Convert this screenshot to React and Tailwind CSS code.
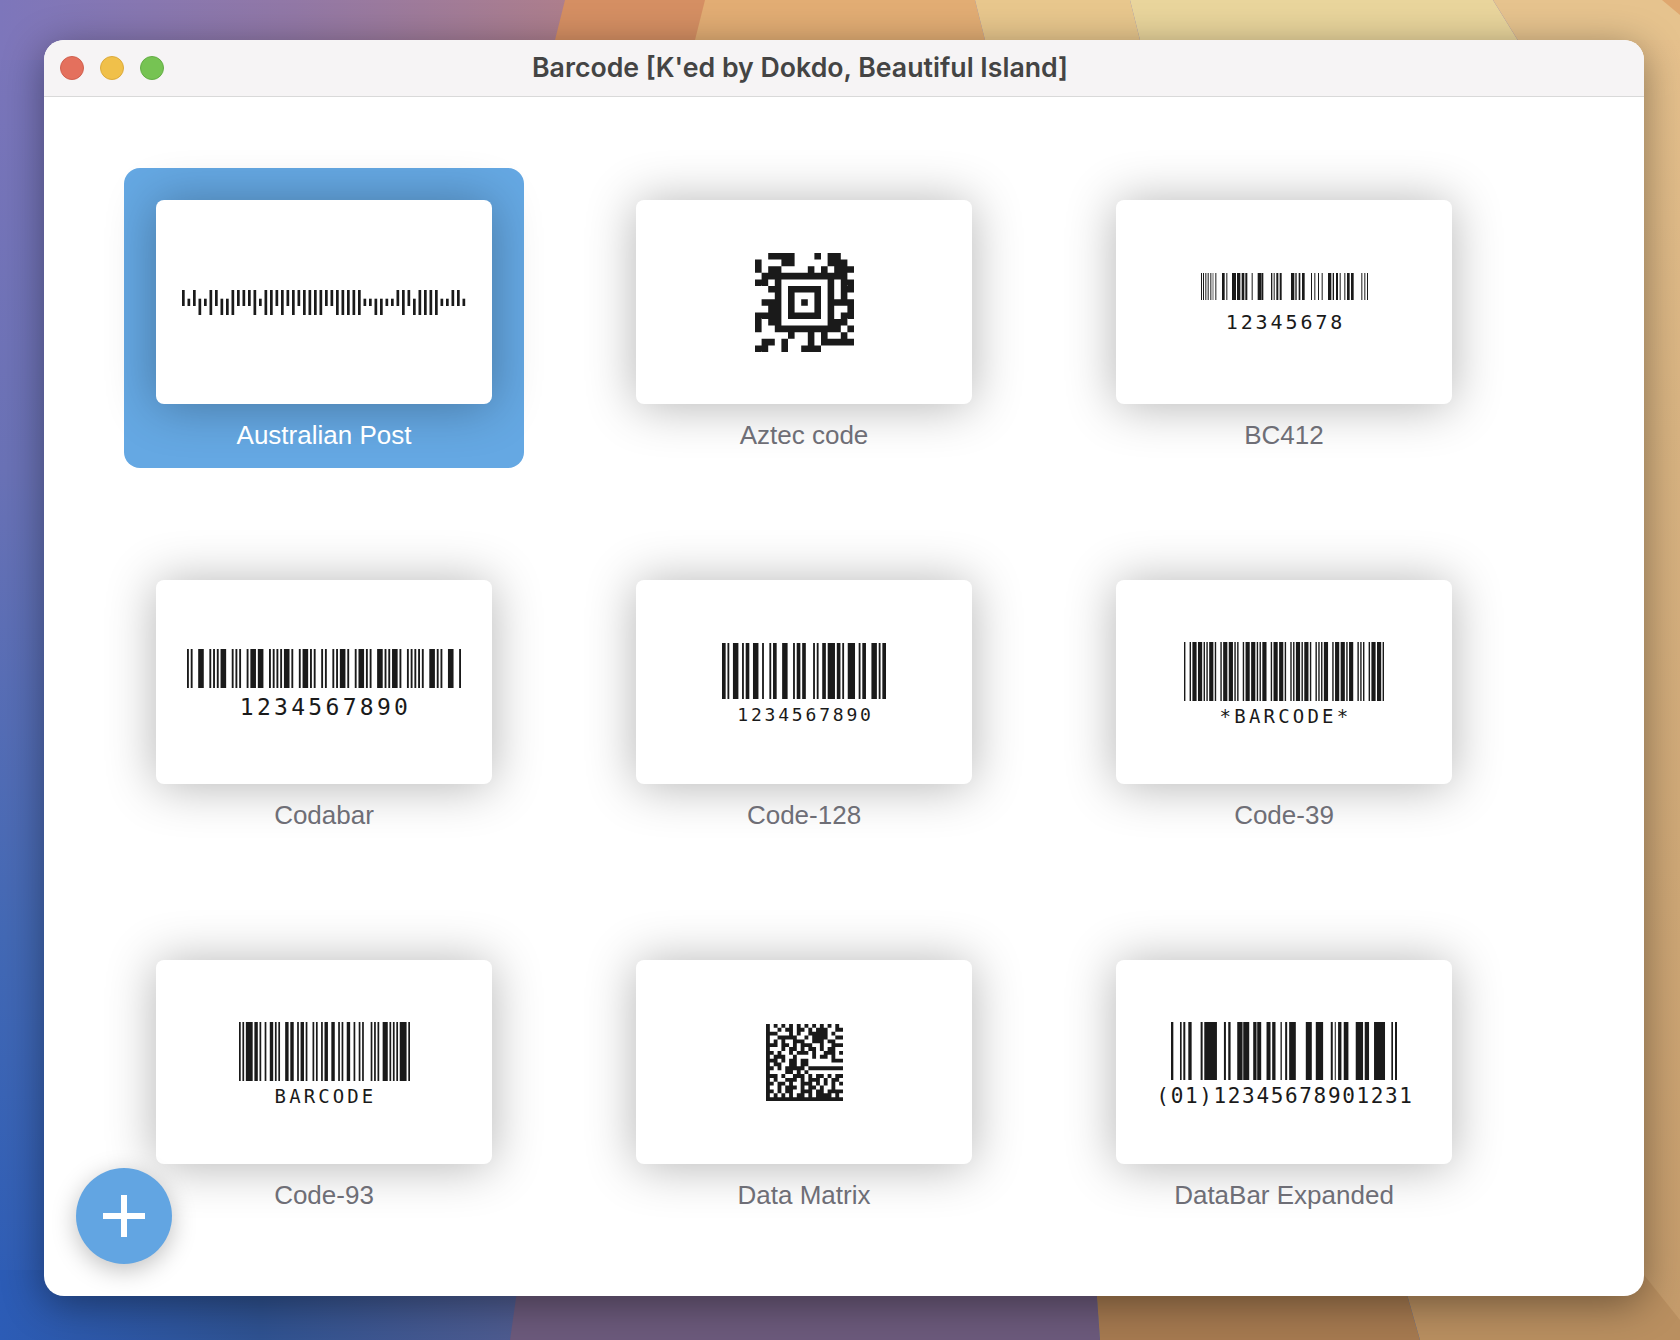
import React from 'react'

const mono = "font-['DejaVu_Sans_Mono',monospace]"

// run-length strings: bar, space, bar, space ...
function fromRuns(runs) {
  const rects = []
  let x = 0
  runs.replace(/\s/g, '').split('').forEach((ch, i) => {
    const w = Number(ch)
    if (i % 2 === 0) rects.push([x, w])
    x += w
  })
  return { rects, total: x }
}

// binary n/w patterns to widths, with a narrow gap between characters
function wideNarrow(chars) {
  const parts = chars.map(c => c.split('').map(d => (d === '1' ? '3' : '1')).join(''))
  return parts.join('1')
}

function Bars({ runs, spans, total, className }) {
  const data = runs ? fromRuns(runs) : { rects: spans.map(([a, b]) => [a, b - a]), total }
  return (
    <svg className={className} viewBox={`0 0 ${data.total} 10`} preserveAspectRatio="none">
      {data.rects.map(([x, w], i) => (
        <rect key={i} x={x} y={0} width={w} height={10} fill="#1a1a1a" />
      ))}
    </svg>
  )
}

function Grid2D({ rows, className }) {
  const n = rows.length
  let d = ''
  rows.forEach((row, y) => {
    row.split('').forEach((c, x) => {
      if (c === '#') d += `M${x} ${y}h1v1h-1z`
    })
  })
  return (
    <svg className={className} viewBox={`0 0 ${n} ${n}`}>
      <path d={d} fill="#1a1a1a" />
    </svg>
  )
}

const AUS = 'ATADTFADDFAAAFTFFAFAFAFFFFAAFFFFFTTDDTTAFADFFFFTTAAT'

function AusPost() {
  const pitch = 5.5
  const y = { F: [0, 25], A: [0, 16], D: [8.7, 25], T: [8.7, 16] }
  return (
    <svg className="w-[284px] h-[25px]" viewBox="0 0 284 25">
      {AUS.split('').map((s, i) => (
        <rect key={i} x={i * pitch} y={y[s][0]} width={2.7} height={y[s][1] - y[s][0]} fill="#1a1a1a" />
      ))}
    </svg>
  )
}

const AZTEC = [
  '..####...#.##..',
  '#...##.....###.',
  '#.##....#.#.###',
  '.#############.',
  '##.#.......#.##',
  '..##.#####.#.##',
  '...#.#...#.#.#.',
  '.###.#.#.#.####',
  '..##.#...#.#..#',
  '####.#####.#.##',
  '#.##.......###.',
  '#..##########.#',
  '.....#..#.#..#.',
  '.##.#...#.#####',
  '##..#..###.....',
]

const MATRIX = [
  '#.#.#.#.#.#.#.#.#.#.',
  '#..#.##.##.#.###..##',
  '###...#.#..#####.#..',
  '#..#####..#.####..##',
  '#.#.#..###..###.##..',
  '###.##.#.###..#..###',
  '#...#.##.#.##.#.##..',
  '##.#..#.###.#..###.#',
  '#.###..#....#.##.#..',
  '###.#.##.##......###',
  '#.##..##.##.........',
  '##.#.#####.#########',
  '#....##.#.#.........',
  '###.#..###.#.##.#.##',
  '#.#..###.#.###.#.##.',
  '##.##.#..###.#.#.#.#',
  '#..#.###.#.##.#..#..',
  '##.#.##..###.##.####',
  '#.#.#.#.##.#.####.#.',
  '####################',
]

const BC412 = [
  [62, 65], [68, 71], [75, 78], [82, 85], [90, 93], [97, 99], [105, 108], [125, 133], [138, 141],
  [155, 167], [170, 180], [184, 192], [195, 201], [214, 217], [232, 244], [245, 249], [272, 276],
  [280, 283], [288, 294], [298, 304], [332, 342], [345, 349], [355, 360], [365, 373], [392, 395],
  [402, 405], [413, 416], [424, 427], [443, 453], [457, 461], [467, 473], [478, 481], [492, 495],
  [500, 508], [512, 520], [543, 546], [552, 555], [560, 563],
].map(([a, b]) => [a - 62, b - 62])

const DATABAR = [
  [63, 70], [90, 95], [100, 106], [115, 125], [152, 158], [163, 201], [222, 228], [235, 242],
  [262, 278], [280, 298], [310, 320], [322, 334], [350, 362], [367, 377], [392, 396], [406, 412],
  [418, 438], [468, 486], [498, 520], [543, 549], [555, 558], [565, 575], [582, 596], [618, 640],
  [645, 658], [673, 706], [725, 730], [736, 742],
].map(([a, b]) => [a - 63, b - 63])

const CODABAR = wideNarrow([
  '0001110', '0000110', '0001001', '1100000', '0010010', '1000010', '0100001',
  '0100100', '0110000', '1001000', '0000011', '0001110',
])

const CODE128 = '211232 112232 131123 331121 241112 214121 124211 2331112'

const CODE39 = wideNarrow([
  '010010100', '001001001', '100001001', '100000110', '101001000',
  '100010010', '000011001', '100011000', '010010100',
])

const CODE93 = '111141 211212 211113 212211 211311 121122 221112 221211 141111 123111 111141 1'

const ITEMS = [
  { name: 'Australian Post', code: <AusPost />, selected: true },
  { name: 'Aztec code', code: <Grid2D rows={AZTEC} className="w-[99px] h-[99px]" /> },
  {
    name: 'BC412',
    code: (
      <>
        <Bars spans={BC412} total={501} className="w-[167px] h-[27px]" />
        <div className={`${mono} mt-[13px] pl-[3px] text-[20px] leading-[18px] tracking-[2.9px] text-[#1a1a1a]`}>12345678</div>
      </>
    ),
  },
  {
    name: 'Codabar',
    code: (
      <>
        <Bars runs={CODABAR} className="w-[274px] h-[39px]" />
        <div className={`${mono} mt-[11px] pl-[3px] text-[23px] leading-[16px] tracking-[3.3px] text-[#1a1a1a]`}>1234567890</div>
      </>
    ),
  },
  {
    name: 'Code-128',
    code: (
      <>
        <Bars runs={CODE128} className="w-[164px] h-[56px]" />
        <div className={`${mono} mt-[10px] pl-[3px] text-[18px] leading-[12px] tracking-[2.8px] text-[#1a1a1a]`}>1234567890</div>
      </>
    ),
  },
  {
    name: 'Code-39',
    code: (
      <>
        <Bars runs={CODE39} className="w-[200px] h-[59px]" />
        <div className={`${mono} mt-[9px] pl-[3px] text-[19px] leading-[12px] tracking-[3.2px] text-[#1a1a1a]`}>*BARCODE*</div>
      </>
    ),
  },
  {
    name: 'Code-93',
    code: (
      <>
        <Bars runs={CODE93} className="w-[171px] h-[59px]" />
        <div className={`${mono} mt-[9px] pl-[3px] text-[19px] leading-[12px] tracking-[3.1px] text-[#1a1a1a]`}>BARCODE</div>
      </>
    ),
  },
  { name: 'Data Matrix', code: <Grid2D rows={MATRIX} className="w-[77px] h-[77px]" /> },
  {
    name: 'DataBar Expanded',
    code: (
      <>
        <Bars spans={DATABAR} total={679} className="w-[226px] h-[58px]" />
        <div className={`${mono} mt-[10px] pl-[2px] text-[21px] leading-[12px] tracking-[1.65px] text-[#1a1a1a]`}>(01)12345678901231</div>
      </>
    ),
  },
]

function Wallpaper() {
  return (
    <svg className="absolute inset-0 w-[1680px] h-[1340px]" viewBox="0 0 1680 1340">
      <defs>
        <linearGradient id="left" x1="0" y1="0" x2="0" y2="1">
          <stop offset="0" stopColor="#7d76bb" />
          <stop offset="0.35" stopColor="#6a72b6" />
          <stop offset="0.7" stopColor="#4369b5" />
          <stop offset="1" stopColor="#2c5cb6" />
        </linearGradient>
        <linearGradient id="topband" x1="0" y1="0" x2="1" y2="0">
          <stop offset="0" stopColor="#7d76bb" />
          <stop offset="0.5" stopColor="#9278a6" />
          <stop offset="1" stopColor="#b07f8a" />
        </linearGradient>
        <linearGradient id="bottomblue" x1="0" y1="0" x2="1" y2="0">
          <stop offset="0" stopColor="#2c5cb6" />
          <stop offset="0.5" stopColor="#2f5291" />
          <stop offset="1" stopColor="#4f5c90" />
        </linearGradient>
        <linearGradient id="rightband" x1="0" y1="0" x2="0" y2="1">
          <stop offset="0" stopColor="#e6c18d" />
          <stop offset="0.3" stopColor="#d9b482" />
          <stop offset="1" stopColor="#c49b6b" />
        </linearGradient>
      </defs>
      <rect x="0" y="0" width="1680" height="1340" fill="url(#left)" />
      <rect x="0" y="0" width="590" height="60" fill="url(#topband)" />
      <polygon points="565,0 720,0 690,60 550,60" fill="#d58f63" />
      <polygon points="705,0 975,0 990,60 690,60" fill="#e2ad74" />
      <polygon points="975,0 1130,0 1145,60 990,60" fill="#e8c78d" />
      <polygon points="1130,0 1493,0 1530,60 1145,60" fill="#e9d59c" />
      <polygon points="1493,0 1680,0 1680,60 1530,60" fill="#e6c38e" />
      <polygon points="1662,0 1680,0 1680,15" fill="#dfa76f" />
      <rect x="1600" y="40" width="80" height="1300" fill="url(#rightband)" />
      <rect x="0" y="1270" width="520" height="70" fill="url(#bottomblue)" />
      <polygon points="520,1270 1095,1270 1100,1340 510,1340" fill="#6c5a7c" />
      <polygon points="1095,1270 1400,1270 1420,1340 1100,1340" fill="#a67a50" />
      <polygon points="1400,1270 1640,1270 1680,1320 1680,1340 1420,1340" fill="#b98f60" />
    </svg>
  )
}

function Tile({ item }) {
  return (
    <div className={`w-[400px] h-[300px] rounded-[16px] pt-[32px] flex flex-col items-center ${item.selected ? 'bg-[#65a8e3]' : ''}`}>
      <div className="w-[336px] h-[204px] rounded-[8px] bg-white shadow-[0_2px_50px_rgba(0,0,0,0.3)] flex flex-col items-center justify-center">
        {item.code}
      </div>
      <div className={`mt-[16px] text-[26px] leading-[30px] font-['Liberation_Sans',sans-serif] ${item.selected ? 'text-white' : 'text-[#6e6e76]'}`}>
        {item.name}
      </div>
    </div>
  )
}

export default function App() {
  return (
    <div className="relative w-[1680px] h-[1340px] overflow-hidden">
      <Wallpaper />
      <div className="relative pl-[44px] pt-[40px]">
        <div className="relative w-[1600px] h-[1256px] rounded-[20px] bg-white overflow-hidden shadow-[0_8px_40px_rgba(0,0,0,0.4)] flex flex-col">
          <div className="h-[57px] shrink-0 bg-[#f6f4f5] border-b border-[#d9d9d9] flex items-center px-[16px]">
            <div className="flex gap-[16px]">
              <span className="w-[24px] h-[24px] rounded-full bg-[#e4705d] border border-[#d0604f]" />
              <span className="w-[24px] h-[24px] rounded-full bg-[#f0c04a] border border-[#dcaa3c]" />
              <span className="w-[24px] h-[24px] rounded-full bg-[#76c353] border border-[#64ad46]" />
            </div>
            <div className="flex-1 text-center pr-[192px] pb-[2px] text-[26.7px] font-semibold text-[#444444] font-['Inter',sans-serif]">
              Barcode [K'ed by Dokdo, Beautiful Island]
            </div>
          </div>
          <div className="grid grid-cols-[repeat(3,400px)] gap-[80px] pl-[80px] pt-[71px]">
            {ITEMS.map(item => (
              <Tile key={item.name} item={item} />
            ))}
          </div>
          <button className="absolute left-[32px] bottom-[32px] w-[96px] h-[96px] rounded-full bg-[#62a5e2] shadow-[0_6px_24px_rgba(0,0,0,0.25)] flex items-center justify-center">
            <svg className="w-[42px] h-[42px]" viewBox="0 0 42 42">
              <path d="M18 0h6v18h18v6H24v18h-6V24H0v-6h18z" fill="#fff" />
            </svg>
          </button>
        </div>
      </div>
    </div>
  )
}
